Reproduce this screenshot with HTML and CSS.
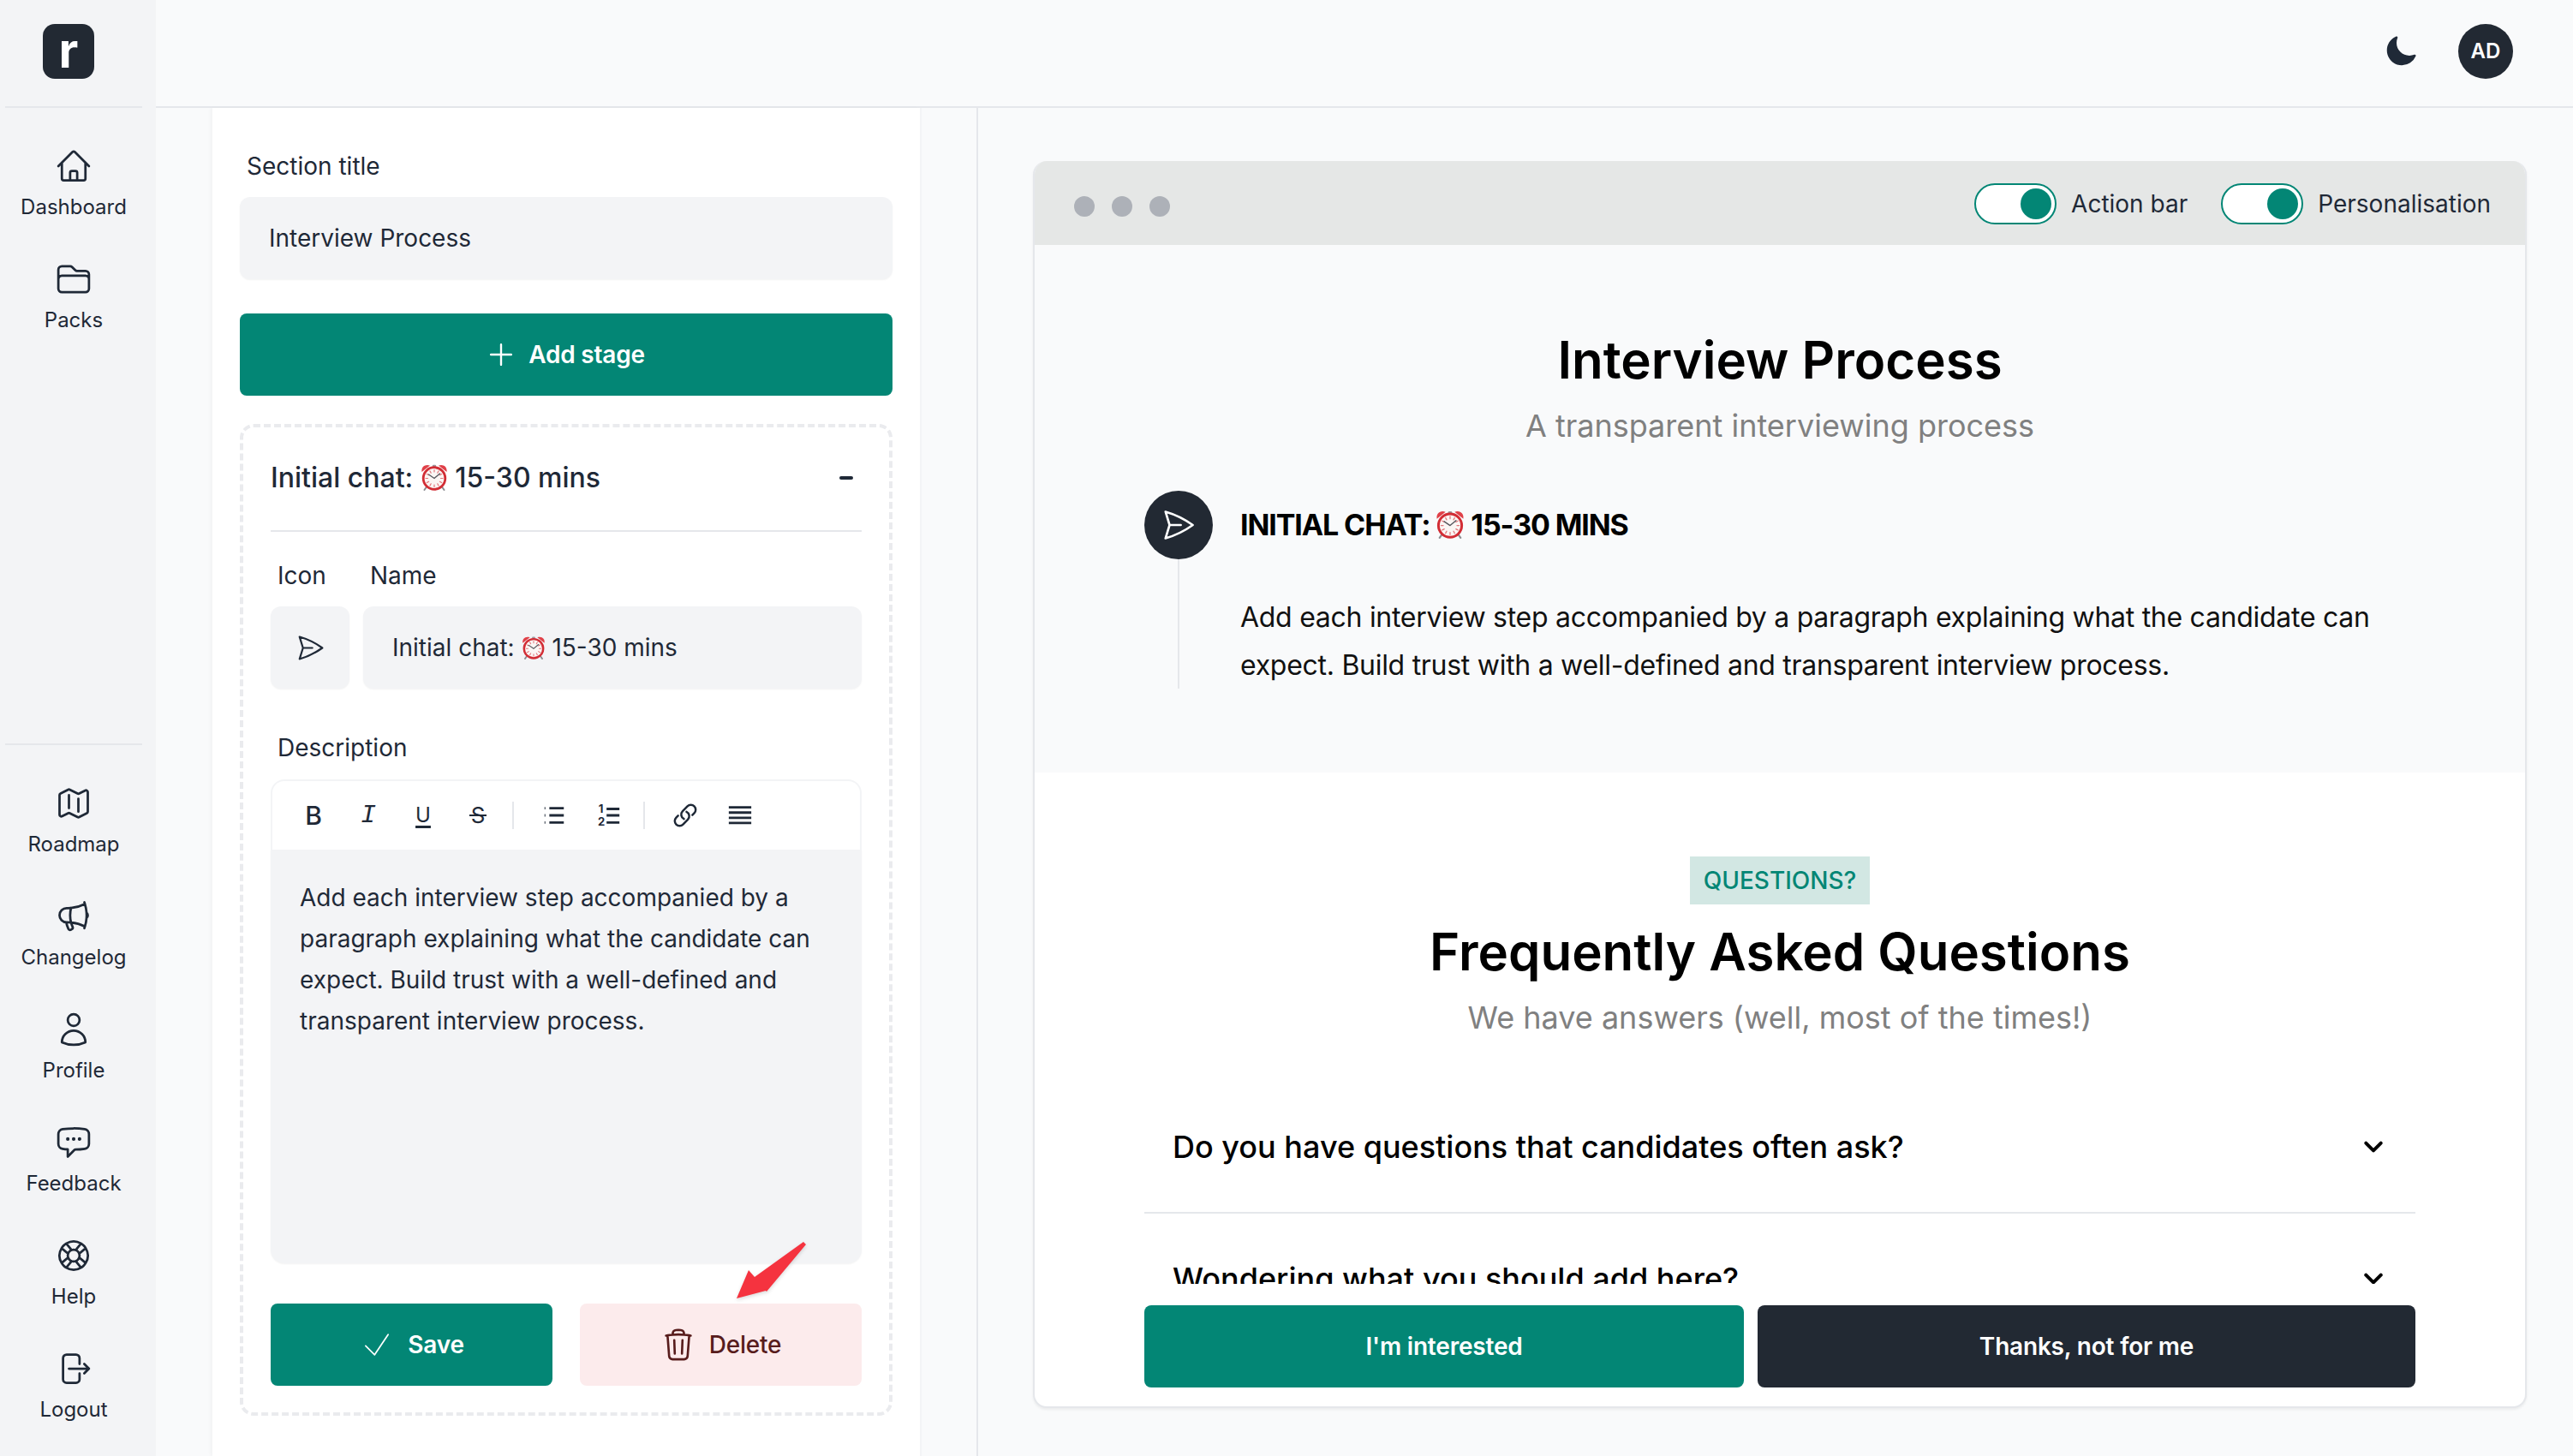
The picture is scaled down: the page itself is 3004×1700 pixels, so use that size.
FILE: index.html
```html
<!DOCTYPE html>
<html lang="en">
<head>
    <meta charset="UTF-8">
    <meta name="viewport" content="width=device-width, initial-scale=1.0">
    <title>Interview Process</title>
    <link rel="stylesheet" href="styles.css">
</head>
<body>
    <svg class="sprite" aria-hidden="true">
        <symbol id="clock" viewBox="0 0 32 32">
            <path d="M8 26 4.500 31M24 26 27.500 31" stroke="#8d8d92" stroke-width="2" stroke-linecap="round"/>
            <path d="M15 3h2" stroke="#9a9a9f" stroke-width="2.400"/>
            <path d="M1.500 10C.5 4.500 5 .5 11 2.500ZM30.500 10C31.500 4.500 27 .5 21 2.500Z" fill="#e04048"/>
            <circle cx="16" cy="17.500" r="12.800" fill="#fbf6f4" stroke="#d22d35" stroke-width="2.800"/>
            <path d="M16 7.500v2.500M16 25v2.500M6 17.500h2.500M23.500 17.500H26M11 9l1.200 2.200M21 9l-1.200 2.200M11 26l1.200-2.200M21 26l-1.200-2.200M7.400 12.500l2.200 1.200M24.600 12.500l-2.200 1.200M7.400 22.500l2.200-1.200M24.600 22.500l-2.200-1.200" stroke="#e2777c" stroke-width="1.200"/>
            <path d="M9.500 13 16 17.500 22.500 12" fill="none" stroke="#55565c" stroke-width="1.300"/>
        </symbol>
        <symbol id="send" viewBox="0 0 24 24">
            <path d="M6 12 3.269 3.125A59.769 59.769 0 0 1 21.485 12 59.768 59.768 0 0 1 3.27 20.875L5.999 12Zm0 0h7.5"/>
        </symbol>
        <symbol id="chevron" viewBox="0 0 24 24">
            <path d="m19.5 8.25-7.5 7.5-7.5-7.5"/>
        </symbol>
    </svg>

    <aside class="sidebar">
        <div class="logo-row">
            <div class="logo">r</div>
        </div>
        <nav class="nav">
            <a class="nav-item">
                <svg class="nav-icon" viewBox="0 0 24 24"><path d="m2.25 12 8.954-8.955c.44-.439 1.152-.439 1.591 0L21.75 12M4.5 9.75v10.125c0 .621.504 1.125 1.125 1.125H9.75v-4.875c0-.621.504-1.125 1.125-1.125h2.25c.621 0 1.125.504 1.125 1.125V21h4.125c.621 0 1.125-.504 1.125-1.125V9.75M8.25 21h8.25"/></svg>
                <span>Dashboard</span>
            </a>
            <a class="nav-item">
                <svg class="nav-icon" viewBox="0 0 24 24"><path d="M2.25 12.75V12A2.25 2.25 0 0 1 4.5 9.75h15A2.25 2.25 0 0 1 21.75 12v.75m-8.69-6.44-2.12-2.12a1.5 1.5 0 0 0-1.061-.44H4.5A2.25 2.25 0 0 0 2.25 6v12a2.25 2.25 0 0 0 2.25 2.25h15A2.25 2.25 0 0 0 21.75 18V9a2.25 2.25 0 0 0-2.25-2.25h-5.379a1.5 1.5 0 0 1-1.06-.44Z"/></svg>
                <span>Packs</span>
            </a>
        </nav>
        <nav class="nav nav-bottom">
            <a class="nav-item">
                <svg class="nav-icon" viewBox="0 0 24 24"><path d="M9 6.75V15m6-6v8.25m.503 3.498 4.875-2.437c.381-.19.622-.58.622-1.006V4.82c0-.836-.88-1.38-1.628-1.006l-3.869 1.934c-.317.159-.69.159-1.006 0L9.503 3.252a1.125 1.125 0 0 0-1.006 0L3.622 5.689C3.24 5.88 3 6.27 3 6.695V19.18c0 .836.88 1.38 1.628 1.006l3.869-1.934c.317-.159.69-.159 1.006 0l4.994 2.497c.317.158.69.158 1.006 0Z"/></svg>
                <span>Roadmap</span>
            </a>
            <a class="nav-item">
                <svg class="nav-icon" viewBox="0 0 24 24"><path d="M10.34 15.84c-.688-.06-1.386-.09-2.09-.09H7.5a4.5 4.5 0 1 1 0-9h.75c.704 0 1.402-.03 2.09-.09m0 9.18c.253.962.584 1.892.985 2.783.247.55.06 1.21-.463 1.511l-.657.38c-.551.318-1.26.117-1.527-.461a20.845 20.845 0 0 1-1.44-4.282m3.102.069a18.03 18.03 0 0 1-.59-4.59c0-1.586.205-3.124.59-4.59m0 9.18a23.848 23.848 0 0 1 8.835 2.535M10.34 6.66a23.847 23.847 0 0 0 8.835-2.535m0 0A23.74 23.74 0 0 0 18.795 3m.38 1.125a23.91 23.91 0 0 1 1.014 5.395m-1.014 8.855c-.118.38-.245.754-.38 1.125m.38-1.125a23.91 23.91 0 0 0 1.014-5.395m0-3.46c.495.413.811 1.035.811 1.73 0 .695-.316 1.317-.811 1.73m0-3.46a24.347 24.347 0 0 1 0 3.46"/></svg>
                <span>Changelog</span>
            </a>
            <a class="nav-item">
                <svg class="nav-icon" viewBox="0 0 24 24"><path d="M15.75 6a3.75 3.75 0 1 1-7.5 0 3.75 3.75 0 0 1 7.5 0ZM4.501 20.118a7.5 7.5 0 0 1 14.998 0A17.933 17.933 0 0 1 12 21.75c-2.676 0-5.216-.584-7.499-1.632Z"/></svg>
                <span>Profile</span>
            </a>
            <a class="nav-item">
                <svg class="nav-icon" viewBox="0 0 24 24"><path d="M8.625 9.75a.375.375 0 1 1-.75 0 .375.375 0 0 1 .75 0Zm0 0H8.25m4.125 0a.375.375 0 1 1-.75 0 .375.375 0 0 1 .75 0Zm0 0H12m4.125 0a.375.375 0 1 1-.75 0 .375.375 0 0 1 .75 0Zm0 0h-.375m-13.5 3.01c0 1.6 1.123 2.994 2.707 3.227 1.087.16 2.185.283 3.293.369V21l4.184-4.183a1.14 1.14 0 0 1 .778-.332 48.294 48.294 0 0 0 5.83-.498c1.585-.233 2.708-1.626 2.708-3.228V6.741c0-1.602-1.123-2.995-2.707-3.228A48.394 48.394 0 0 0 12 3c-2.392 0-4.744.175-7.043.513C3.373 3.746 2.25 5.14 2.25 6.741v6.018Z"/></svg>
                <span>Feedback</span>
            </a>
            <a class="nav-item">
                <svg class="nav-icon" viewBox="0 0 24 24"><path d="M16.712 4.33a9.027 9.027 0 0 1 1.652 1.306c.51.51.944 1.064 1.306 1.652M16.712 4.33l-3.448 4.138m3.448-4.138a9.014 9.014 0 0 0-9.424 0M19.67 7.288l-4.138 3.448m4.138-3.448a9.014 9.014 0 0 1 0 9.424m-4.138-5.976a3.736 3.736 0 0 0-.88-1.388 3.737 3.737 0 0 0-1.388-.88m2.268 2.268a3.765 3.765 0 0 1 0 2.528m-2.268-4.796a3.765 3.765 0 0 0-2.528 0m4.796 4.796c-.181.506-.475.982-.88 1.388a3.736 3.736 0 0 1-1.388.88m2.268-2.268 4.138 3.448m0 0a9.027 9.027 0 0 1-1.306 1.652c-.51.51-1.064.944-1.652 1.306m0 0-3.448-4.138m3.448 4.138a9.014 9.014 0 0 1-9.424 0m5.976-4.138a3.765 3.765 0 0 1-2.528 0m0 0a3.736 3.736 0 0 1-1.388-.88 3.737 3.737 0 0 1-.88-1.388m2.268 2.268L7.288 19.67m0 0a9.024 9.024 0 0 1-1.652-1.306 9.027 9.027 0 0 1-1.306-1.652m0 0 4.138-3.448M4.33 16.712a9.014 9.014 0 0 1 0-9.424m4.138 5.976a3.765 3.765 0 0 1 0-2.528m0 0c.181-.506.475-.982.88-1.388a3.736 3.736 0 0 1 1.388-.88m-2.268 2.268L4.33 7.288m6.406 1.18L7.288 4.33m0 0a9.024 9.024 0 0 0-1.652 1.306A9.025 9.025 0 0 0 4.33 7.288"/></svg>
                <span>Help</span>
            </a>
            <a class="nav-item">
                <svg class="nav-icon" viewBox="0 0 24 24"><path d="M15.75 9V5.25A2.25 2.25 0 0 0 13.5 3h-6a2.25 2.25 0 0 0-2.25 2.25v13.5A2.25 2.25 0 0 0 7.5 21h6a2.25 2.25 0 0 0 2.25-2.25V15m3 0 3-3m0 0-3-3m3 3H9"/></svg>
                <span>Logout</span>
            </a>
        </nav>
    </aside>

    <div class="main">
        <header class="topbar">
            <svg class="moon" viewBox="0 0 24 24"><path d="M9.528 1.718a.75.75 0 0 1 .162.819A8.97 8.97 0 0 0 9 6a9 9 0 0 0 9 9 8.97 8.97 0 0 0 3.463-.69.75.75 0 0 1 .981.98 10.503 10.503 0 0 1-9.694 6.46c-5.799 0-10.5-4.7-10.5-10.5 0-4.368 2.667-8.112 6.46-9.694a.75.75 0 0 1 .818.162Z"/></svg>
            <div class="avatar">AD</div>
        </header>

        <div class="workspace">
            <section class="editor-panel">
                <div class="label section-label">Section title</div>
                <div class="field">Interview Process</div>
                <button class="btn btn-teal add-stage">
                    <svg class="btn-icon plus-icon" viewBox="0 0 24 24"><path d="M12 4.5v15m7.5-7.5h-15"/></svg>
                    Add stage
                </button>

                <div class="stage-card">
                    <div class="stage-card-head">
                        <span>Initial chat: <svg class="emoji"><use href="#clock"/></svg> 15-30 mins</span>
                        <i class="minus"></i>
                    </div>
                    <div class="name-row labels">
                        <div class="label">Icon</div>
                        <div class="label">Name</div>
                    </div>
                    <div class="name-row">
                        <div class="field icon-field"><svg class="send-small"><use href="#send"/></svg></div>
                        <div class="field">Initial chat:&nbsp;<svg class="emoji"><use href="#clock"/></svg>&nbsp;15-30 mins</div>
                    </div>
                    <div class="label desc-label">Description</div>
                    <div class="rte">
                        <div class="rte-toolbar">
                            <span class="tool tool-b">B</span>
                            <span class="tool tool-i">I</span>
                            <span class="tool tool-u">U</span>
                            <span class="tool tool-s">S</span>
                            <span class="tool-sep"></span>
                            <span class="tool">
                                <svg class="tool-icon" viewBox="0 0 32 32"><path d="M10 7h18M10 16h18M10 25h18"/><path class="dots" d="M4 7h1M4 16h1M4 25h1"/></svg>
                            </span>
                            <span class="tool">
                                <svg class="tool-icon" viewBox="0 0 32 32"><path d="M13 8h16M13 16h16M13 25h16"/><text x="3" y="13" class="num">1</text><text x="2" y="29" class="num">2</text></svg>
                            </span>
                            <span class="tool-sep"></span>
                            <span class="tool">
                                <svg class="tool-icon link-icon" viewBox="0 0 24 24"><path d="M13.19 8.688a4.5 4.5 0 0 1 1.242 7.244l-4.5 4.5a4.5 4.5 0 0 1-6.364-6.364l1.757-1.757m13.35-.622 1.757-1.757a4.5 4.5 0 0 0-6.364-6.364l-4.5 4.5a4.5 4.5 0 0 0 1.242 7.244"/></svg>
                            </span>
                            <span class="tool">
                                <svg class="tool-icon" viewBox="0 0 32 32"><path d="M2 6h28M2 12.500h28M2 19h28M2 25.500h28"/></svg>
                            </span>
                        </div>
                        <div class="rte-body">Add each interview step accompanied by a paragraph explaining what the candidate can expect. Build trust with a well-defined and transparent interview process.</div>
                    </div>
                    <div class="card-actions">
                        <button class="btn btn-teal">
                            <svg class="btn-icon check-icon" viewBox="0 0 24 24"><path d="m4.5 12.75 6 6 9-13.500"/></svg>
                            Save
                        </button>
                        <button class="btn btn-danger">
                            <svg class="btn-icon" viewBox="0 0 24 24"><path d="m14.74 9-.346 9m-4.788 0L9.26 9m9.968-3.21c.342.052.682.107 1.022.166m-1.022-.165L18.16 19.673a2.25 2.25 0 0 1-2.244 2.077H8.084a2.25 2.25 0 0 1-2.244-2.077L4.772 5.79m14.456 0a48.108 48.108 0 0 0-3.478-.397m-12 .562c.34-.059.68-.114 1.022-.165m0 0a48.11 48.11 0 0 1 3.478-.397m7.5 0v-.916c0-1.18-.91-2.164-2.09-2.201a51.964 51.964 0 0 0-3.32 0c-1.18.037-2.09 1.022-2.09 2.201v.916m7.5 0a48.667 48.667 0 0 0-7.5 0"/></svg>
                            Delete
                            <svg class="annotation" viewBox="0 0 82 70"><path d="M0 66 14 33 21 41 78 0 81 3 35 58 34 57Z"/></svg>
                        </button>
                    </div>
                </div>
            </section>

            <section class="preview-pane">
                <div class="preview">
                    <div class="preview-bar">
                        <div class="dots-row"><i></i><i></i><i></i></div>
                        <div class="switch-row">
                            <span class="switch"><i></i></span>
                            <span>Action bar</span>
                        </div>
                        <div class="switch-row">
                            <span class="switch"><i></i></span>
                            <span>Personalisation</span>
                        </div>
                    </div>

                    <div class="preview-body">
                        <div class="process">
                            <h2 class="heading">Interview Process</h2>
                            <p class="subheading">A transparent interviewing process</p>
                            <div class="timeline">
                                <div class="timeline-dot"><svg class="send-big"><use href="#send"/></svg></div>
                                <h3 class="timeline-title">Initial chat: <svg class="emoji"><use href="#clock"/></svg> 15-30 mins</h3>
                                <div class="timeline-line"></div>
                                <p class="timeline-text">Add each interview step accompanied by a paragraph explaining what the candidate can expect. Build trust with a well-defined and transparent interview process.</p>
                            </div>
                        </div>
                        <div class="faq">
                            <span class="badge">QUESTIONS?</span>
                            <h2 class="heading faq-heading">Frequently Asked Questions</h2>
                            <p class="subheading">We have answers (well, most of the times!)</p>
                            <div class="faq-list">
                                <div class="faq-row">
                                    <span>Do you have questions that candidates often ask?</span>
                                    <svg class="chevron"><use href="#chevron"/></svg>
                                </div>
                                <div class="faq-row">
                                    <span>Wondering what you should add here?</span>
                                    <svg class="chevron"><use href="#chevron"/></svg>
                                </div>
                            </div>
                        </div>
                    </div>

                    <div class="action-bar">
                        <button class="btn btn-teal interested">I'm interested</button>
                        <button class="btn btn-dark not-for-me">Thanks, not for me</button>
                    </div>
                </div>
            </section>
        </div>
    </div>
</body>
</html>
```

FILE: styles.css
```css
:root {
    --teal: #038675;
    --dark: #222933;
    --text: #1f2937;
    --grey-bg: #f3f4f6;
    --page-bg: #f9fafb;
    --line: #e5e7eb;
}

* {
    margin: 0;
    padding: 0;
    box-sizing: border-box;
}

body {
    display: flex;
    height: 100vh;
    overflow: hidden;
    font-family: Inter, "Liberation Sans", sans-serif;
    font-size: 28px;
    line-height: 40px;
    color: var(--text);
    background: var(--page-bg);
}

.sprite {
    display: none;
}

svg {
    fill: none;
    stroke: currentColor;
    stroke-width: 1.5;
    stroke-linecap: round;
    stroke-linejoin: round;
}

/* Sidebar */
.sidebar {
    display: flex;
    flex-direction: column;
    flex: 0 0 182px;
    padding: 0 16px 0 6px;
    background: var(--grey-bg);
}

.logo-row {
    height: 126px;
    padding: 28px 0 0 44px;
    border-bottom: 2px solid var(--line);
}

.logo {
    width: 60px;
    height: 64px;
    border-radius: 14px;
    background: var(--dark);
    color: #fff;
    font-size: 56px;
    font-weight: 700;
    line-height: 62px;
    text-align: center;
}

.nav {
    display: flex;
    flex-direction: column;
    gap: 46px;
    padding-top: 46px;
}

.nav-bottom {
    margin-top: auto;
    padding-bottom: 38px;
    border-top: 2px solid var(--line);
}

.nav-item {
    display: flex;
    flex-direction: column;
    align-items: center;
    gap: 8px;
    height: 88px;
    margin-bottom: -2px;
    font-size: 24px;
    line-height: 36px;
}

.nav-icon {
    width: 44px;
    height: 44px;
}

/* Top bar */
.main {
    display: flex;
    flex-direction: column;
    flex: 1;
    min-width: 0;
}

.topbar {
    display: flex;
    align-items: center;
    justify-content: flex-end;
    gap: 47px;
    flex: 0 0 126px;
    padding: 0 70px 4px 0;
    border-bottom: 2px solid var(--line);
}

.moon {
    width: 40px;
    height: 40px;
    fill: var(--text);
    stroke: none;
}

.avatar {
    width: 64px;
    height: 64px;
    border-radius: 50%;
    background: var(--dark);
    color: #fff;
    font-size: 24px;
    font-weight: 600;
    line-height: 64px;
    text-align: center;
}

.workspace {
    display: flex;
    flex: 1;
    min-height: 0;
    padding-left: 66px;
}

/* Editor column */
.editor-panel {
    flex: 0 0 828px;
    padding: 48px 32px 0;
    background: #fff;
    border-right: 2px solid var(--grey-bg);
    box-shadow: -3px 0 3px rgba(0, 0, 0, 0.025);
}

.label {
    padding-left: 8px;
}

.section-label {
    margin-bottom: 16px;
}

.field {
    display: flex;
    align-items: center;
    height: 96px;
    padding: 0 34px;
    border-radius: 12px;
    background: var(--grey-bg);
    box-shadow: 0 1px 2px rgba(0, 0, 0, 0.05);
}

.btn {
    display: flex;
    align-items: center;
    justify-content: center;
    height: 96px;
    border: none;
    border-radius: 8px;
    font-family: inherit;
    font-size: 28px;
    font-weight: 600;
    letter-spacing: -0.2px;
}

.btn-teal {
    background: var(--teal);
    color: #fff;
}

.btn-dark {
    background: var(--dark);
    color: #fff;
}

.btn-danger {
    position: relative;
    background: #fcebec;
    color: #571c1c;
    font-weight: 500;
}

.btn-icon {
    width: 42px;
    height: 42px;
    margin-right: 15px;
}

.plus-icon {
    width: 38px;
    height: 38px;
    margin-right: 13px;
}

.check-icon {
    stroke-width: 1;
}

.add-stage {
    width: 100%;
    margin: 40px 0 33px;
    padding-right: 3px;
}

.stage-card {
    height: 1158px;
    padding: 0 32px;
    border: 4px dashed #eaebee;
    border-radius: 16px;
}

.stage-card-head {
    display: flex;
    align-items: center;
    justify-content: space-between;
    height: 122px;
    padding: 0 10px 2px 0;
    border-bottom: 2px solid var(--line);
    font-size: 32px;
    font-weight: 500;
}

.minus {
    width: 16px;
    height: 4px;
    border-radius: 2px;
    background: var(--text);
}

.emoji {
    width: 1em;
    height: 1em;
    stroke: none;
    vertical-align: -0.13em;
}

.name-row {
    display: grid;
    grid-template-columns: 92px 1fr;
    gap: 16px;
}

.labels {
    margin: 31px 0 16px;
}

.icon-field {
    justify-content: center;
    padding: 0;
}

.send-small {
    width: 35px;
    height: 35px;
}

.desc-label {
    margin: 49px 0 17px;
}

/* Rich text box */
.rte-toolbar {
    display: flex;
    align-items: center;
    height: 82px;
    padding: 0 16px;
    border: 2px solid var(--grey-bg);
    border-bottom: none;
    border-radius: 16px 16px 0 0;
}

.tool {
    position: relative;
    display: flex;
    align-items: center;
    justify-content: center;
    width: 64px;
    height: 36px;
    font-size: 30px;
}

.tool-b {
    font-weight: 500;
}

.tool-i {
    font-family: "Liberation Mono", monospace;
    font-style: italic;
}

.tool-u {
    font-size: 24px;
    text-decoration: underline;
    text-decoration-thickness: 3px;
    text-underline-offset: 4px;
}

.tool-s {
    font-size: 26px;
}

.tool-s::after {
    content: "";
    position: absolute;
    left: 22px;
    top: 17px;
    width: 20px;
    height: 2px;
    background: var(--text);
}

.tool-sep {
    width: 2px;
    height: 32px;
    margin: 0 15px 0 8px;
    background: var(--line);
}

.tool-icon {
    width: 30px;
    height: 30px;
    stroke-width: 3;
    stroke-linecap: butt;
}

.tool-icon .dots {
    stroke-width: 3;
}

.tool-icon .num {
    fill: currentColor;
    stroke: none;
    font-size: 14px;
    font-weight: 700;
}

.link-icon {
    stroke-width: 2;
    stroke-linecap: round;
}

.rte-body {
    height: 483px;
    padding: 32px 20px 0 34px;
    border-radius: 0 0 16px 16px;
    background: var(--grey-bg);
    box-shadow: 0 1px 2px rgba(0, 0, 0, 0.05);
    line-height: 48px;
}

.card-actions {
    display: grid;
    grid-template-columns: 1fr 1fr;
    gap: 32px;
    margin-top: 47px;
}

/* Red arrow laid over the delete button */
.annotation {
    position: absolute;
    left: 183px;
    top: -72px;
    width: 82px;
    height: 70px;
    fill: #f5333f;
    stroke: none;
    filter: drop-shadow(0 2px 2px rgba(0, 0, 0, 0.15));
}

/* Preview column */
.preview-pane {
    flex: 1;
    min-width: 0;
    margin-left: 64px;
    padding: 62px 54px 56px 64px;
    border-left: 2px solid var(--line);
}

.preview {
    display: flex;
    flex-direction: column;
    height: 100%;
    overflow: hidden;
    background: #fff;
    border: 2px solid var(--line);
    border-top: none;
    border-radius: 16px;
    box-shadow: 0 2px 3px rgba(0, 0, 0, 0.06);
}

.preview-bar {
    display: flex;
    align-items: center;
    flex: 0 0 98px;
    margin: 0 -2px;
    padding: 2px 42px 0 48px;
    background: #e5e7e6;
}

.dots-row {
    display: flex;
    gap: 20px;
    margin-right: auto;
    padding-top: 6px;
}

.dots-row i {
    width: 24px;
    height: 24px;
    border-radius: 50%;
    background: #adb1b8;
}

.switch-row {
    display: flex;
    align-items: center;
    gap: 17px;
    margin-left: 39px;
}

.switch {
    display: flex;
    justify-content: flex-end;
    width: 96px;
    height: 48px;
    padding: 4px 4px 0 0;
    border: 2px solid var(--teal);
    border-radius: 24px;
    background: #fff;
}

.switch i {
    width: 36px;
    height: 36px;
    border-radius: 50%;
    background: var(--teal);
}

.preview-body {
    flex: 1;
    min-height: 0;
    overflow: hidden;
    text-align: center;
}

.process {
    height: 616px;
    padding: 98px 128px 0;
    background: var(--page-bg);
}

.heading {
    color: #000;
    font-size: 60px;
    font-weight: 600;
    line-height: 72px;
}

.subheading {
    margin-top: 13px;
    color: #808080;
    font-size: 36px;
    line-height: 56px;
}

.timeline {
    display: grid;
    grid-template-columns: 80px 1fr;
    column-gap: 32px;
    margin-top: 48px;
    text-align: left;
}

.timeline-dot {
    display: flex;
    align-items: center;
    justify-content: center;
    height: 80px;
    border-radius: 50%;
    background: var(--dark);
    color: #fff;
}

.send-big {
    width: 42px;
    height: 42px;
}

.timeline-title {
    align-self: center;
    color: #000;
    font-size: 34px;
    font-weight: 700;
    letter-spacing: -1.1px;
    line-height: 48px;
    text-transform: uppercase;
}

.timeline-line {
    justify-self: center;
    width: 2px;
    margin-bottom: 1px;
    background: var(--line);
}

.timeline-text {
    padding-top: 40px;
    color: #111;
    font-size: 32px;
    letter-spacing: -0.28px;
    line-height: 56px;
}

.faq {
    padding: 98px 128px 0;
}

.badge {
    display: inline-block;
    height: 56px;
    padding: 0 16px;
    background: #d2e7e3;
    color: var(--teal);
    font-weight: 500;
    line-height: 56px;
    vertical-align: top;
}

.faq-heading {
    margin-top: 19px;
}

.faq-list {
    margin-top: 49px;
}

.faq-row {
    display: flex;
    align-items: center;
    justify-content: space-between;
    height: 152px;
    padding: 0 35px 2px 33px;
    border-bottom: 2px solid var(--line);
    color: #000;
    font-size: 36px;
    font-weight: 500;
}

.faq-row + .faq-row {
    padding-top: 4px;
}

.chevron {
    width: 28px;
    height: 28px;
    stroke-width: 3.4;
}

.action-bar {
    display: flex;
    gap: 16px;
    flex: 0 0 143px;
    padding: 25px 128px 0;
}

.interested {
    flex: 0 0 700px;
}

.not-for-me {
    flex: 1;
}
```
